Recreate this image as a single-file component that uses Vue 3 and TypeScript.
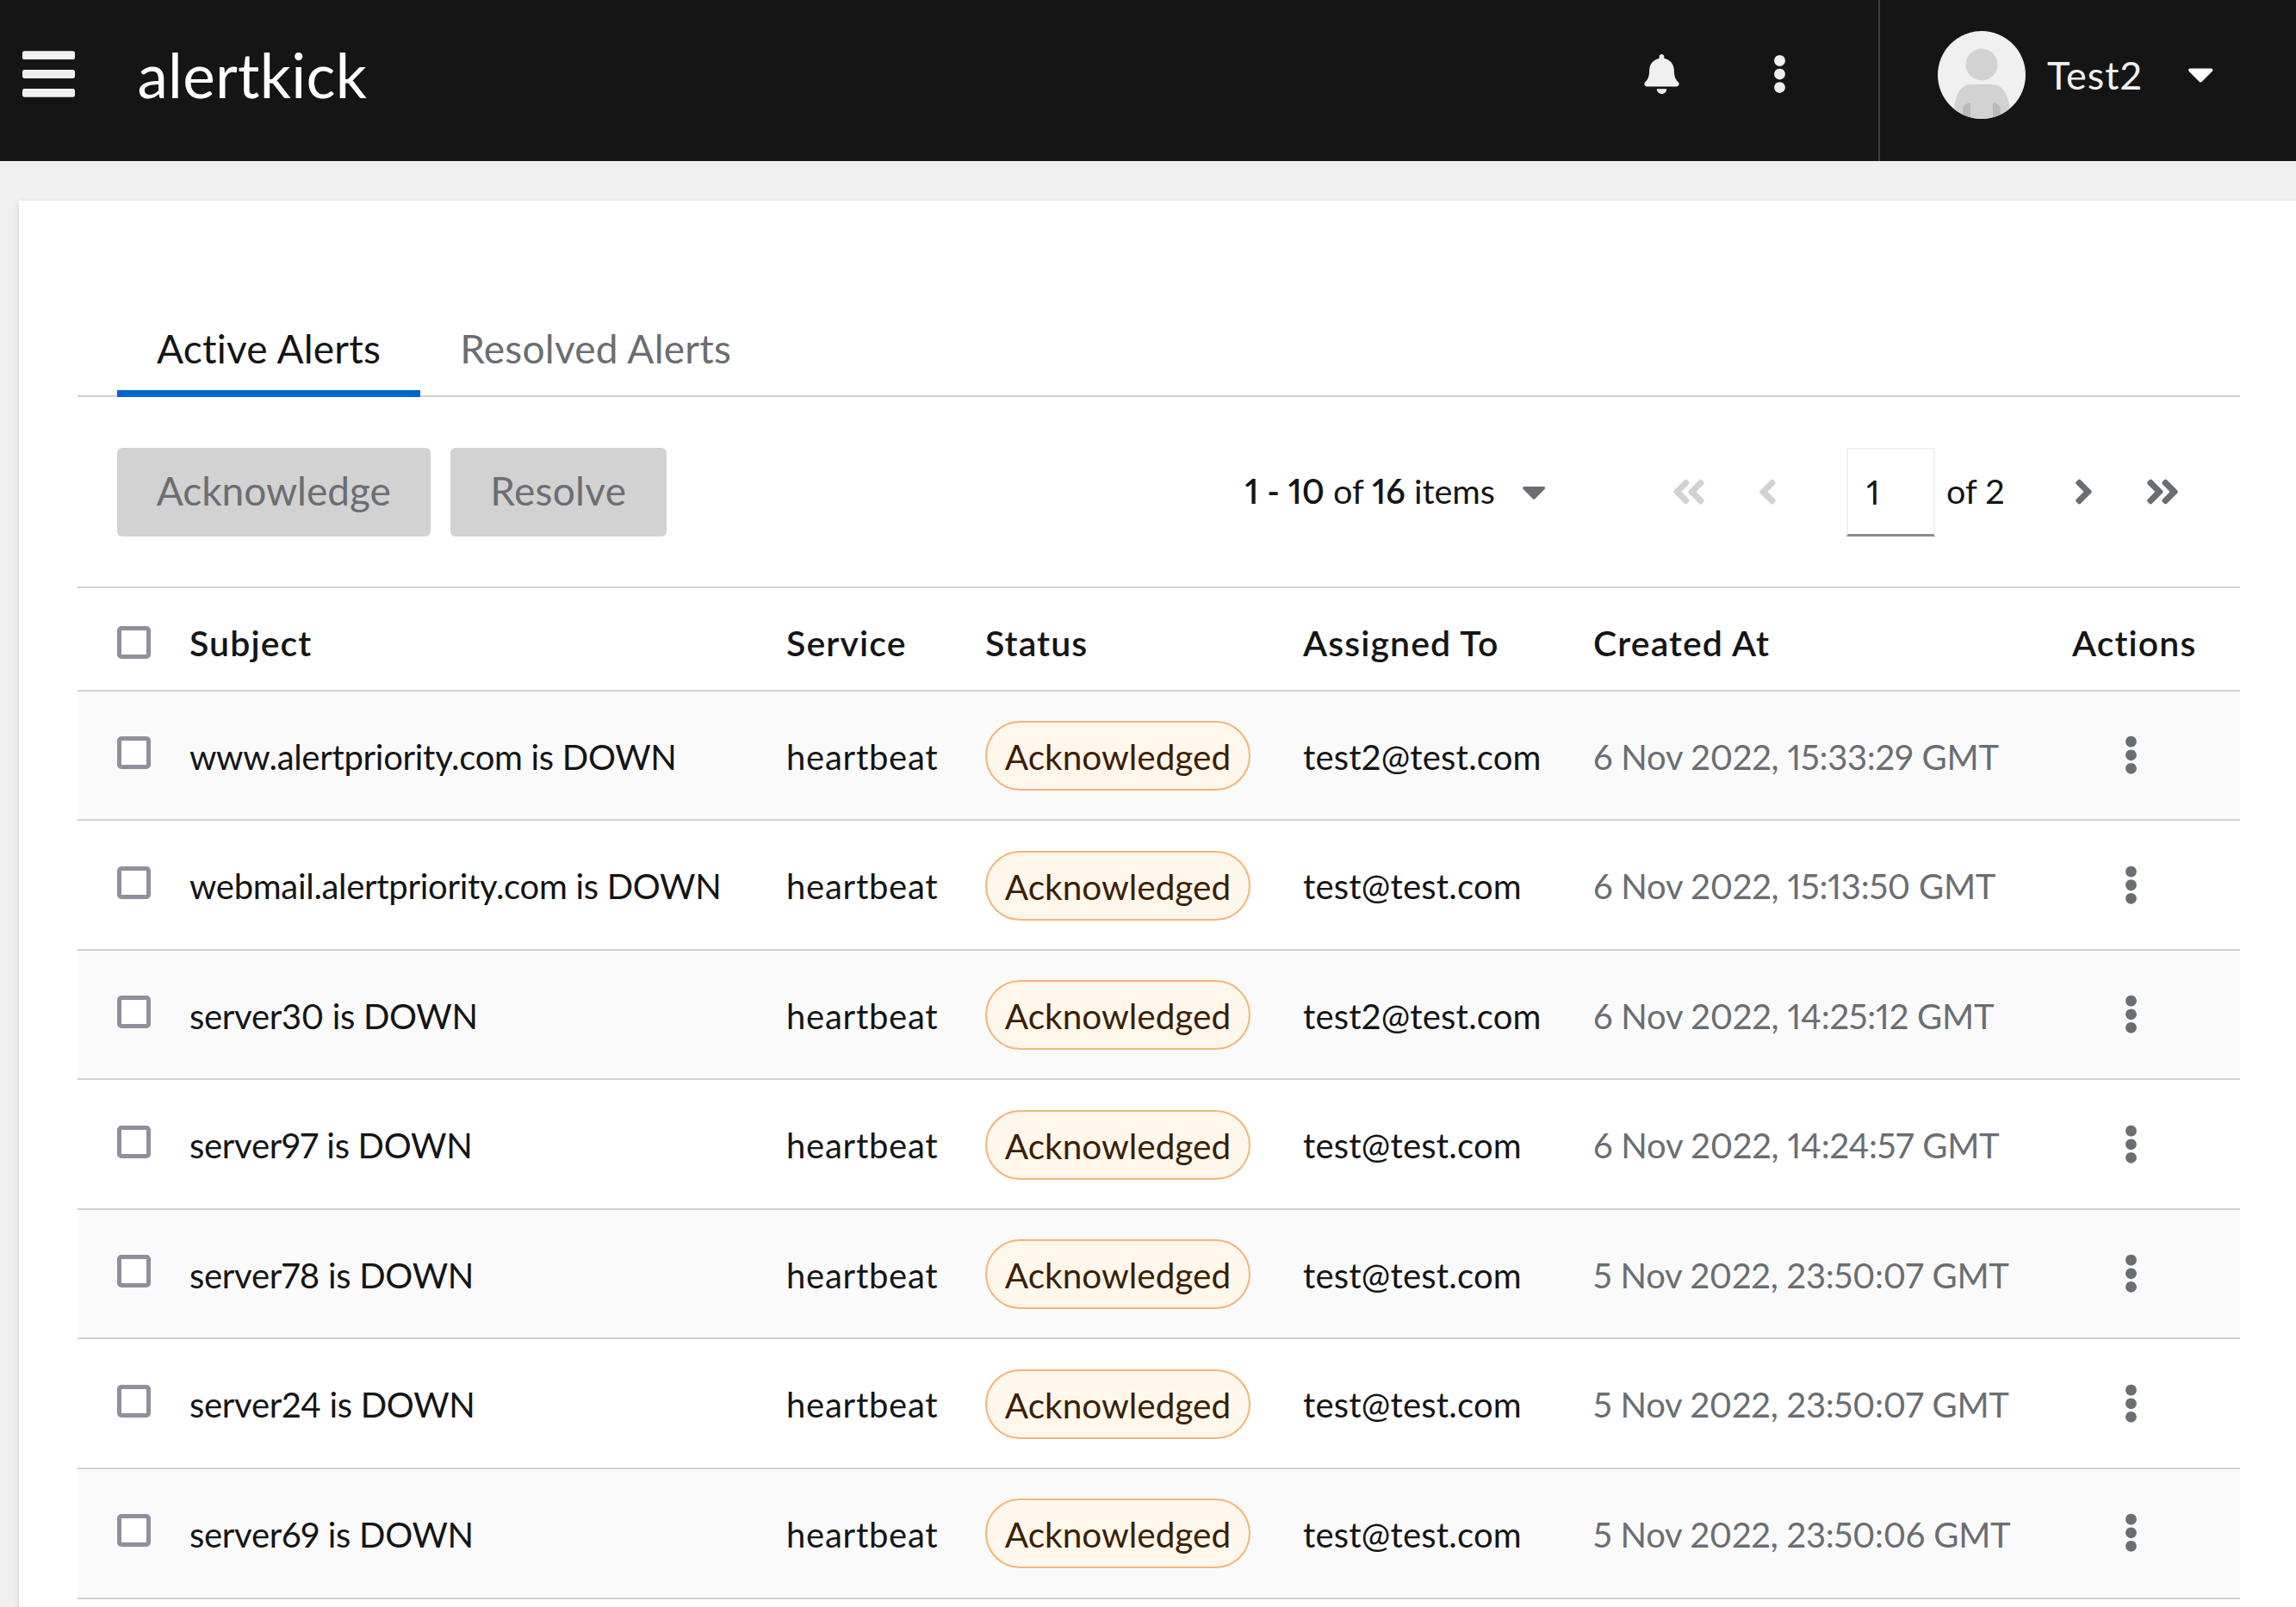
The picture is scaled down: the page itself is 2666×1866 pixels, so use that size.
<script setup lang="ts">
interface Alert {
  subject: string
  assignee: string
  created: string
}

const alerts: Alert[] = [
  { subject: 'www.alertpriority.com is DOWN', assignee: 'test2@test.com', created: '6 Nov 2022, 15:33:29 GMT' },
  { subject: 'webmail.alertpriority.com is DOWN', assignee: 'test@test.com', created: '6 Nov 2022, 15:13:50 GMT' },
  { subject: 'server30 is DOWN', assignee: 'test2@test.com', created: '6 Nov 2022, 14:25:12 GMT' },
  { subject: 'server97 is DOWN', assignee: 'test@test.com', created: '6 Nov 2022, 14:24:57 GMT' },
  { subject: 'server78 is DOWN', assignee: 'test@test.com', created: '5 Nov 2022, 23:50:07 GMT' },
  { subject: 'server24 is DOWN', assignee: 'test@test.com', created: '5 Nov 2022, 23:50:07 GMT' },
  { subject: 'server69 is DOWN', assignee: 'test@test.com', created: '5 Nov 2022, 23:50:06 GMT' },
]

const dots =
  'M96 184c39.8 0 72 32.2 72 72s-32.2 72-72 72-72-32.2-72-72 32.2-72 72-72zM24 80c0 39.8 32.2 72 72 72s72-32.2 72-72S135.8 8 96 8 24 40.2 24 80zm0 352c0 39.8 32.2 72 72 72s72-32.2 72-72-32.2-72-72-72-72 32.2-72 72z'
const caret =
  'M31.3 192h257.3c17.8 0 26.7 21.5 14.1 34.1L174.1 354.8c-7.8 7.8-20.5 7.8-28.3 0L17.2 226.1C4.6 213.5 13.5 192 31.3 192z'
</script>

<template>
  <div class="page">
    <header class="masthead">
      <svg class="bars" viewBox="0 0 448 512"><path d="M16 132h416c8.837 0 16-7.163 16-16V76c0-8.837-7.163-16-16-16H16C7.163 60 0 67.163 0 76v40c0 8.837 7.163 16 16 16zm0 160h416c8.837 0 16-7.163 16-16v-40c0-8.837-7.163-16-16-16H16c-8.837 0-16 7.163-16 16v40c0 8.837 7.163 16 16 16zm0 160h416c8.837 0 16-7.163 16-16v-40c0-8.837-7.163-16-16-16H16c-8.837 0-16 7.163-16 16v40c0 8.837 7.163 16 16 16z" /></svg>
      <span class="logo">alertkick</span>
      <div class="tools">
        <svg class="bell" viewBox="0 0 448 512"><path d="M224 512c35.32 0 63.97-28.65 63.97-64H160.03c0 35.35 28.65 64 63.97 64zm215.39-149.71c-19.32-20.76-55.47-51.99-55.47-154.29 0-77.7-54.48-139.9-127.94-155.16V32c0-17.67-14.32-32-31.98-32s-31.98 14.33-31.98 32v20.84C118.56 68.1 64.08 130.3 64.08 208c0 102.3-36.15 133.53-55.47 154.29-6 6.45-8.66 14.16-8.61 21.71.11 16.4 12.98 32 32.1 32h383.8c19.12 0 32-15.6 32.1-32 .05-7.55-2.61-15.27-8.61-21.71z" /></svg>
        <svg class="kebab" viewBox="0 0 192 512"><path :d="dots" /></svg>
      </div>
      <div class="user">
        <svg class="avatar" viewBox="0 0 102 102">
          <defs>
            <clipPath id="avatar-clip"><circle cx="51" cy="51" r="51" /></clipPath>
          </defs>
          <circle cx="51" cy="51" r="51" fill="#f0f0f0" />
          <g clip-path="url(#avatar-clip)">
            <ellipse cx="51" cy="39" rx="18.5" ry="18.5" fill="#d2d2d2" />
            <path d="M18 102 C19 76 25 63 38 62 H64 C77 63 83 76 86 102 Z" fill="#d2d2d2" />
            <path d="M29 102 V92 C29 87 32 84 38 83 V102 Z M73 102 V92 C73 87 70 84 64 83 V102 Z" fill="#b8bbbe" />
          </g>
        </svg>
        <span class="user-name">Test2</span>
        <svg class="user-caret" viewBox="0 0 320 512"><path :d="caret" /></svg>
      </div>
    </header>

    <main class="card">
      <nav class="tabs">
        <a class="tab active">Active Alerts</a>
        <a class="tab">Resolved Alerts</a>
      </nav>

      <div class="toolbar">
        <button class="btn">Acknowledge</button>
        <button class="btn resolve">Resolve</button>
        <div class="pager">
          <span class="count"><b>1 - 10</b> of <b>16</b> items</span>
          <svg class="count-caret" viewBox="0 0 320 512"><path :d="caret" /></svg>
          <svg class="nav first" viewBox="0 0 448 512"><path d="M223.7 239l136-136c9.4-9.4 24.6-9.4 33.9 0l22.6 22.6c9.4 9.4 9.4 24.6 0 33.9L319.9 256l96.4 96.4c9.4 9.4 9.4 24.6 0 33.9L393.7 413c-9.4 9.4-24.6 9.4-33.9 0l-136-136c-9.5-9.4-9.5-24.6-.1-34zm-192 34l136 136c9.4 9.4 24.6 9.4 33.9 0l22.6-22.6c9.4-9.4 9.4-24.6 0-33.9L127.9 256l96.4-96.4c9.4-9.4 9.4-24.6 0-33.9L201.7 103c-9.4-9.4-24.6-9.4-33.9 0l-136 136c-9.5 9.4-9.5 24.6-.1 34z" /></svg>
          <svg class="nav prev" viewBox="0 0 256 512"><path d="M31.7 239l136-136c9.4-9.4 24.6-9.4 33.9 0l22.6 22.6c9.4 9.4 9.4 24.6 0 33.9L127.9 256l96.4 96.4c9.4 9.4 9.4 24.6 0 33.9L201.7 413c-9.4 9.4-24.6 9.4-33.9 0l-136-136c-9.5-9.4-9.5-24.6-.1-34z" /></svg>
          <span class="page-input">1</span>
          <span class="page-of">of 2</span>
          <svg class="nav next" viewBox="0 0 256 512"><path d="M224.3 273l-136 136c-9.4 9.4-24.6 9.4-33.9 0l-22.6-22.6c-9.4-9.4-9.4-24.6 0-33.9l96.4-96.4-96.4-96.4c-9.4-9.4-9.4-24.6 0-33.9L54.3 103c9.4-9.4 24.6-9.4 33.9 0l136 136c9.5 9.4 9.5 24.6.1 34z" /></svg>
          <svg class="nav last" viewBox="0 0 448 512"><path d="M224.3 273l-136 136c-9.4 9.4-24.6 9.4-33.9 0l-22.6-22.6c-9.4-9.4-9.4-24.6 0-33.9l96.4-96.4-96.4-96.4c-9.4-9.4-9.4-24.6 0-33.9L54.3 103c9.4-9.4 24.6-9.4 33.9 0l136 136c9.5 9.4 9.5 24.6.1 34zm192-34l-136-136c-9.4-9.4-24.6-9.4-33.9 0l-22.6 22.6c-9.4 9.4-9.4 24.6 0 33.9l96.4 96.4-96.4 96.4c-9.4 9.4-9.4 24.6 0 33.9l22.6 22.6c9.4 9.4 24.6 9.4 33.9 0l136-136c9.4-9.2 9.4-24.4 0-33.8z" /></svg>
        </div>
      </div>

      <div class="table">
        <div class="row head">
          <span class="check" />
          <span>Subject</span>
          <span>Service</span>
          <span>Status</span>
          <span>Assigned To</span>
          <span>Created At</span>
          <span>Actions</span>
        </div>
        <div v-for="alert in alerts" :key="alert.subject" class="row body">
          <span class="check" />
          <span class="subject">{{ alert.subject }}</span>
          <span class="service">heartbeat</span>
          <span class="status"><span class="pill">Acknowledged</span></span>
          <span class="assignee">{{ alert.assignee }}</span>
          <span class="created">{{ alert.created }}</span>
          <span class="actions"><svg class="row-kebab" viewBox="0 0 192 512"><path :d="dots" /></svg></span>
        </div>
      </div>
    </main>
  </div>
</template>

<style scoped>
.page {
  width: 2666px;
  height: 1866px;
  overflow: hidden;
  background: #f0f0f0;
  color: #151515;
  font-family: Lato, "Liberation Sans", sans-serif;
  font-size: 40px;
  font-variant-numeric: proportional-nums;
}

.masthead {
  height: 187px;
  background: #151515;
  display: flex;
  align-items: center;
  color: #f0f0f0;
}

.bars {
  width: 61px;
  height: 70px;
  margin-left: 26px;
  margin-top: -16px;
  fill: #f0f0f0;
}

.logo {
  margin-left: 72.5px;
  margin-top: -15px;
  font-size: 71px;
  letter-spacing: 0.3px;
  color: #fff;
}

.tools {
  margin-left: auto;
  width: 274px;
  height: 100%;
  box-sizing: border-box;
  display: flex;
  align-items: center;
  border-right: 2px solid #3c3f42;
}

.bell {
  width: 41px;
  height: 46px;
  margin-top: -15px;
  fill: #f0f0f0;
}

.kebab {
  width: 17px;
  height: 46px;
  margin-left: 108px;
  margin-top: -16px;
  fill: #f0f0f0;
}

.user {
  width: 483px;
  display: flex;
  align-items: center;
  padding-left: 67px;
  box-sizing: border-box;
}

.avatar {
  width: 102px;
  height: 102px;
  margin-top: -13px;
}

.user-name {
  width: 163px;
  margin-left: 25px;
  margin-top: -14px;
  font-size: 45px;
  letter-spacing: 1px;
  color: #f0f0f0;
}

.user-caret {
  width: 30.5px;
  height: 49px;
  margin-top: -16px;
  fill: #fff;
}

.card {
  margin: 46px 0 0 22px;
  height: 1633px;
  background: #fff;
  box-shadow: 0 2px 6px rgba(3, 3, 3, 0.16);
  padding: 0 65px 0 68px;
}

.tabs {
  padding: 126px 0 0 46px;
  height: 100px;
  display: flex;
  border-bottom: 2px solid #d2d2d2;
}

.tab {
  box-sizing: border-box;
  height: 102px;
  padding: 0 46px;
  line-height: 92px;
  font-size: 46px;
  letter-spacing: 0.25px;
  color: #6a6e73;
  border-bottom: 8px solid transparent;
}

.tab.active {
  color: #151515;
  border-bottom-color: #06c;
}

.toolbar {
  height: 220px;
  display: flex;
  align-items: center;
  padding-left: 46px;
  box-sizing: border-box;
}

.btn {
  height: 103px;
  width: 363.5px;
  padding: 0 0 3px;
  border: 0;
  border-radius: 6px;
  background: #d2d2d2;
  color: #6a6e73;
  font: inherit;
  font-size: 46px;
}

.resolve {
  width: 250.5px;
  margin-left: 23.5px;
  letter-spacing: 0.3px;
}

.pager {
  margin-left: 672px;
  display: flex;
  align-items: center;
  font-size: 39.5px;
}

.count {
  width: 321.5px;
  margin-top: -3px;
}

.count b {
  font-weight: 600;
}

.count-caret {
  width: 28.3px;
  height: 45px;
  margin-top: -2px;
  fill: #6a6e73;
}

.nav {
  width: 23px;
  height: 46px;
  fill: #6a6e73;
}

.first,
.last {
  width: 42px;
}

.first {
  margin-left: 144.7px;
  fill: #d2d2d2;
}

.prev {
  margin-left: 59px;
  fill: #d2d2d2;
}

.page-input {
  box-sizing: border-box;
  width: 103px;
  height: 103px;
  margin-left: 80px;
  padding-left: 21px;
  line-height: 97px;
  border: 2px solid #f0f0f0;
  border-bottom: 3px solid #8a8d90;
}

.page-of {
  width: 70px;
  margin-left: 13px;
  margin-top: -3px;
}

.next {
  margin-left: 78px;
}

.last {
  margin-left: 59px;
}

.table {
  border-top: 2px solid #d2d2d2;
}

.row {
  display: grid;
  grid-template-columns: 84px 693px 231px 369px 337px 556px 1fr;
  align-items: center;
  padding-left: 46px;
  box-sizing: border-box;
  border-bottom: 2px solid #d2d2d2;
}

.head {
  height: 119.7px;
  padding-top: 10px;
  font-weight: 600;
  font-size: 41px;
  letter-spacing: 1.1px;
}

.body {
  height: 150.55px;
  padding-top: 3.4px;
  font-size: 40px;
}

.body:nth-child(even) {
  background: #fafafa;
}

.check {
  width: 39px;
  height: 38px;
  box-sizing: border-box;
  border: 5px solid #8f8f9d;
  border-radius: 5px;
  background: #fff;
}

.head .check {
  margin-top: -1px;
}

.body .check {
  margin-top: -9px;
}

.subject {
  letter-spacing: -0.3px;
}

.service {
  letter-spacing: 0.75px;
}

.assignee {
  letter-spacing: 0.2px;
}

.status {
  margin-top: -2px;
}

.pill {
  display: inline-block;
  box-sizing: border-box;
  width: 308px;
  height: 81px;
  line-height: 79px;
  border: 2px solid #f4b678;
  border-radius: 41px;
  background: #fff6ec;
  color: #3b1f00;
  font-size: 40.5px;
  text-align: center;
}

.created {
  color: #6a6e73;
  letter-spacing: -0.25px;
}

.actions {
  display: flex;
  margin-top: -3.4px;
  padding-left: 59.5px;
}

.row-kebab {
  width: 17px;
  height: 45.5px;
  fill: #6a6e73;
}
</style>

<style>
html,
body {
  margin: 0;
}
</style>
